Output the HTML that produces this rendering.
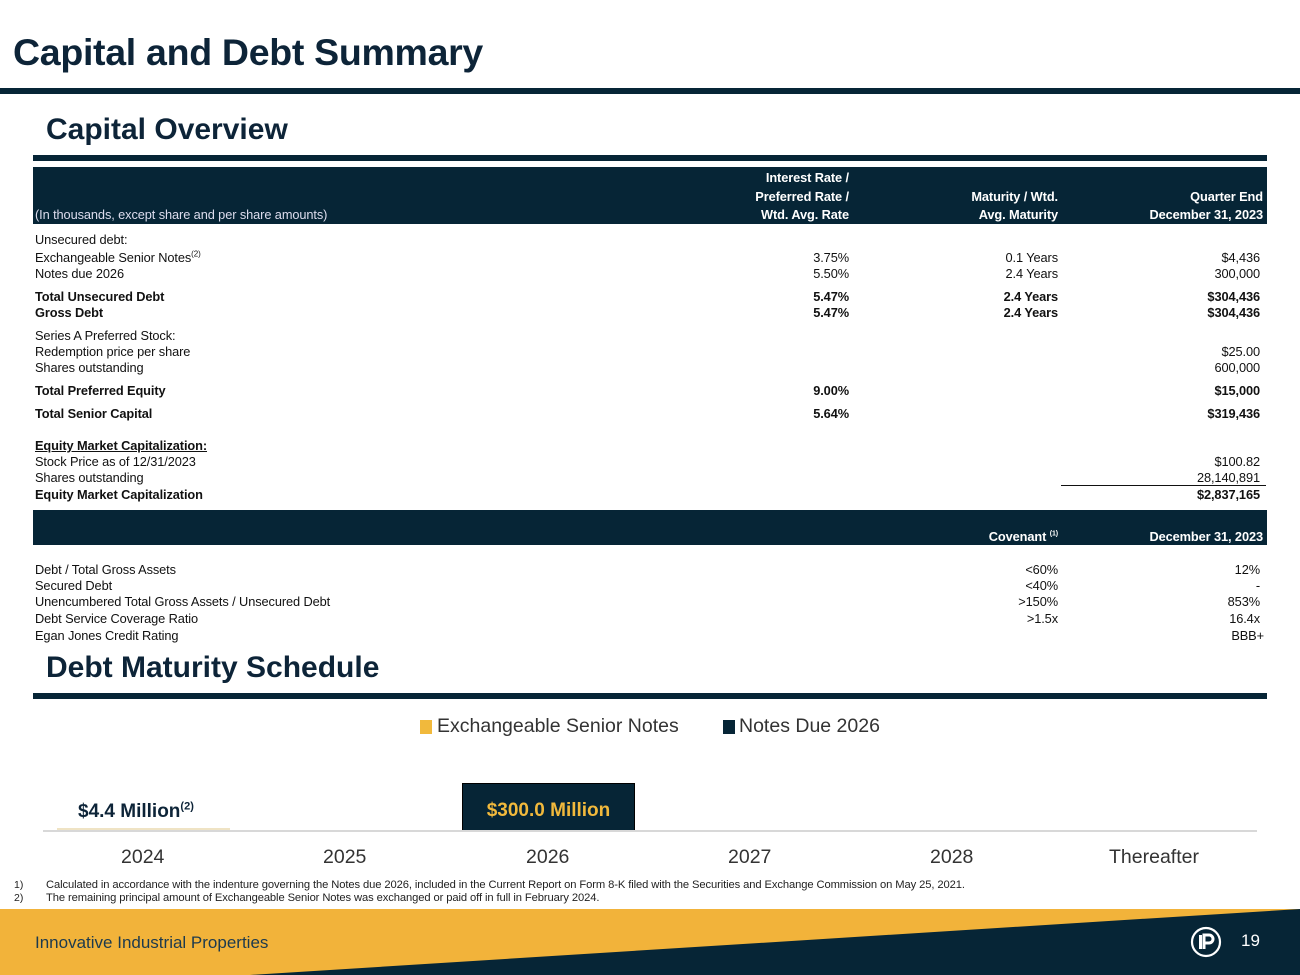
<!DOCTYPE html>
<html><head><meta charset="utf-8"><style>
*{margin:0;padding:0;box-sizing:border-box}
body{width:1300px;height:975px;position:relative;background:#fff;font-family:"Liberation Sans",sans-serif;color:#111;overflow:hidden}
.a{position:absolute}
.r{position:absolute;left:0;width:1300px;height:14px;font-size:12.8px;line-height:14px;letter-spacing:-0.1px}
.r span{position:absolute;white-space:nowrap}
.r sup{line-height:0;font-size:8px}
.l{left:35px}.c1{right:451px}.c2{right:242px}.c3{right:40px}.c3h{right:37px}
.b{font-weight:bold}
.navy{background:#062536}
.h span{color:#fff;font-weight:bold}
</style></head><body>
<div class="a" style="left:13px;top:31px;font-size:37.5px;font-weight:bold;color:#0d2438;letter-spacing:-0.3px">Capital and Debt Summary</div>
<div class="a navy" style="left:0;top:88px;width:1300px;height:6px"></div>
<div class="a" style="left:46px;top:113px;font-size:30px;font-weight:bold;color:#0d2438">Capital Overview</div>
<div class="a navy" style="left:33px;top:155px;width:1234px;height:6px"></div>
<div class="a navy" style="left:33px;top:167px;width:1234px;height:57px"></div>
<div class="r h" style="top:171px"><span class="c1">Interest Rate /</span></div>
<div class="r h" style="top:190px"><span class="c1">Preferred Rate /</span><span class="c2">Maturity / Wtd.</span><span class="c3h">Quarter End</span></div>
<div class="r h" style="top:208px"><span class="l" style="font-weight:normal;color:#dde">(In thousands, except share and per share amounts)</span><span class="c1">Wtd. Avg. Rate</span><span class="c2">Avg. Maturity</span><span class="c3h">December 31, 2023</span></div>

<div class="r" style="top:233px"><span class="l">Unsecured debt:</span></div>
<div class="r" style="top:251px"><span class="l">Exchangeable Senior Notes<sup>(2)</sup></span><span class="c1">3.75%</span><span class="c2">0.1 Years</span><span class="c3">$4,436</span></div>
<div class="r" style="top:267px"><span class="l">Notes due 2026</span><span class="c1">5.50%</span><span class="c2">2.4 Years</span><span class="c3">300,000</span></div>
<div class="r b" style="top:290px"><span class="l">Total Unsecured Debt</span><span class="c1">5.47%</span><span class="c2">2.4 Years</span><span class="c3">$304,436</span></div>
<div class="r b" style="top:306px"><span class="l">Gross Debt</span><span class="c1">5.47%</span><span class="c2">2.4 Years</span><span class="c3">$304,436</span></div>
<div class="r" style="top:329px"><span class="l">Series A Preferred Stock:</span></div>
<div class="r" style="top:345px"><span class="l">Redemption price per share</span><span class="c3">$25.00</span></div>
<div class="r" style="top:361px"><span class="l">Shares outstanding</span><span class="c3">600,000</span></div>
<div class="r b" style="top:384px"><span class="l">Total Preferred Equity</span><span class="c1">9.00%</span><span class="c3">$15,000</span></div>
<div class="r b" style="top:407px"><span class="l">Total Senior Capital</span><span class="c1">5.64%</span><span class="c3">$319,436</span></div>
<div class="r b" style="top:439px"><span class="l" style="text-decoration:underline">Equity Market Capitalization:</span></div>
<div class="r" style="top:455px"><span class="l">Stock Price as of 12/31/2023</span><span class="c3">$100.82</span></div>
<div class="r" style="top:471px"><span class="l">Shares outstanding</span><span class="c3">28,140,891</span></div>
<div class="a" style="left:1061px;top:485px;width:205px;height:1px;background:#111"></div>
<div class="r b" style="top:488px"><span class="l">Equity Market Capitalization</span><span class="c3">$2,837,165</span></div>

<div class="a navy" style="left:33px;top:510px;width:1234px;height:35px"></div>
<div class="r h" style="top:530px"><span class="c2">Covenant <sup style="font-size:7px">(1)</sup></span><span class="c3h">December 31, 2023</span></div>
<div class="r" style="top:563px"><span class="l">Debt / Total Gross Assets</span><span class="c2">&lt;60%</span><span class="c3">12%</span></div>
<div class="r" style="top:579px"><span class="l">Secured Debt</span><span class="c2">&lt;40%</span><span class="c3">-</span></div>
<div class="r" style="top:595px"><span class="l">Unencumbered Total Gross Assets / Unsecured Debt</span><span class="c2">&gt;150%</span><span class="c3">853%</span></div>
<div class="r" style="top:612px"><span class="l">Debt Service Coverage Ratio</span><span class="c2">&gt;1.5x</span><span class="c3">16.4x</span></div>
<div class="r" style="top:629px"><span class="l">Egan Jones Credit Rating</span><span class="c3" style="right:36px">BBB+</span></div>

<div class="a" style="left:46px;top:651px;font-size:30px;font-weight:bold;color:#0d2438">Debt Maturity Schedule</div>
<div class="a navy" style="left:33px;top:693px;width:1234px;height:6px"></div>

<div class="a" style="left:420px;top:720px;width:12px;height:14px;background:#f1b93c"></div>
<div class="a" style="left:437px;top:715px;font-size:19.5px;color:#333">Exchangeable Senior Notes</div>
<div class="a navy" style="left:723px;top:720px;width:12px;height:14px"></div>
<div class="a" style="left:739px;top:715px;font-size:19.5px;color:#333">Notes Due 2026</div>

<div class="a" style="left:78px;top:801px;font-size:19px;font-weight:bold;color:#0d2438">$4.4 Million<sup style="font-size:11px;line-height:0">(2)</sup></div>
<div class="a" style="left:57px;top:828px;width:173px;height:3px;background:#efe3c4"></div>
<div class="a navy" style="left:462px;top:783px;width:173px;height:48px;border:1px solid #000"></div>
<div class="a" style="left:462px;top:800px;width:173px;text-align:center;font-size:19px;font-weight:bold;color:#f1b93c">$300.0 Million</div>
<div class="a" style="left:43px;top:830px;width:1214px;height:2px;background:#d8d8d8"></div>
<div class="a" style="left:0;top:846px;width:1300px;font-size:19.5px;color:#333">
<span class="a" style="left:121px">2024</span><span class="a" style="left:323px">2025</span><span class="a" style="left:526px">2026</span><span class="a" style="left:728px">2027</span><span class="a" style="left:930px">2028</span><span class="a" style="left:1109px">Thereafter</span></div>

<div class="a" style="left:14px;top:879px;font-size:10.5px;line-height:13px;color:#222">1)</div>
<div class="a" style="left:46px;top:879px;font-size:11.2px;line-height:13px;color:#222;letter-spacing:-0.1px">Calculated in accordance with the indenture governing the Notes due 2026, included in the Current Report on Form 8-K filed with the Securities and Exchange Commission on May 25, 2021.</div>
<div class="a" style="left:14px;top:892px;font-size:10.5px;line-height:13px;color:#222">2)</div>
<div class="a" style="left:46px;top:892px;font-size:11.2px;line-height:13px;color:#222;letter-spacing:-0.1px">The remaining principal amount of Exchangeable Senior Notes was exchanged or paid off in full in February 2024.</div>

<svg class="a" style="left:0;top:909px" width="1300" height="66"><rect width="1300" height="66" fill="#f2b33a"/><polygon points="1300,0 1300,66 250,66" fill="#062536"/></svg>
<div class="a" style="left:35px;top:933px;font-size:17px;color:#1c3a4e">Innovative Industrial Properties</div>
<svg class="a" style="left:1190px;top:926px" width="32" height="32"><circle cx="16" cy="16" r="14" fill="none" stroke="#fff" stroke-width="2.2"/><rect x="9" y="9" width="3" height="14" fill="#fff"/><path d="M14 23V9h5a4 4 0 0 1 0 8h-5" fill="none" stroke="#fff" stroke-width="3"/></svg>
<div class="a" style="left:1241px;top:931px;font-size:17px;color:#fff">19</div>
</body></html>
